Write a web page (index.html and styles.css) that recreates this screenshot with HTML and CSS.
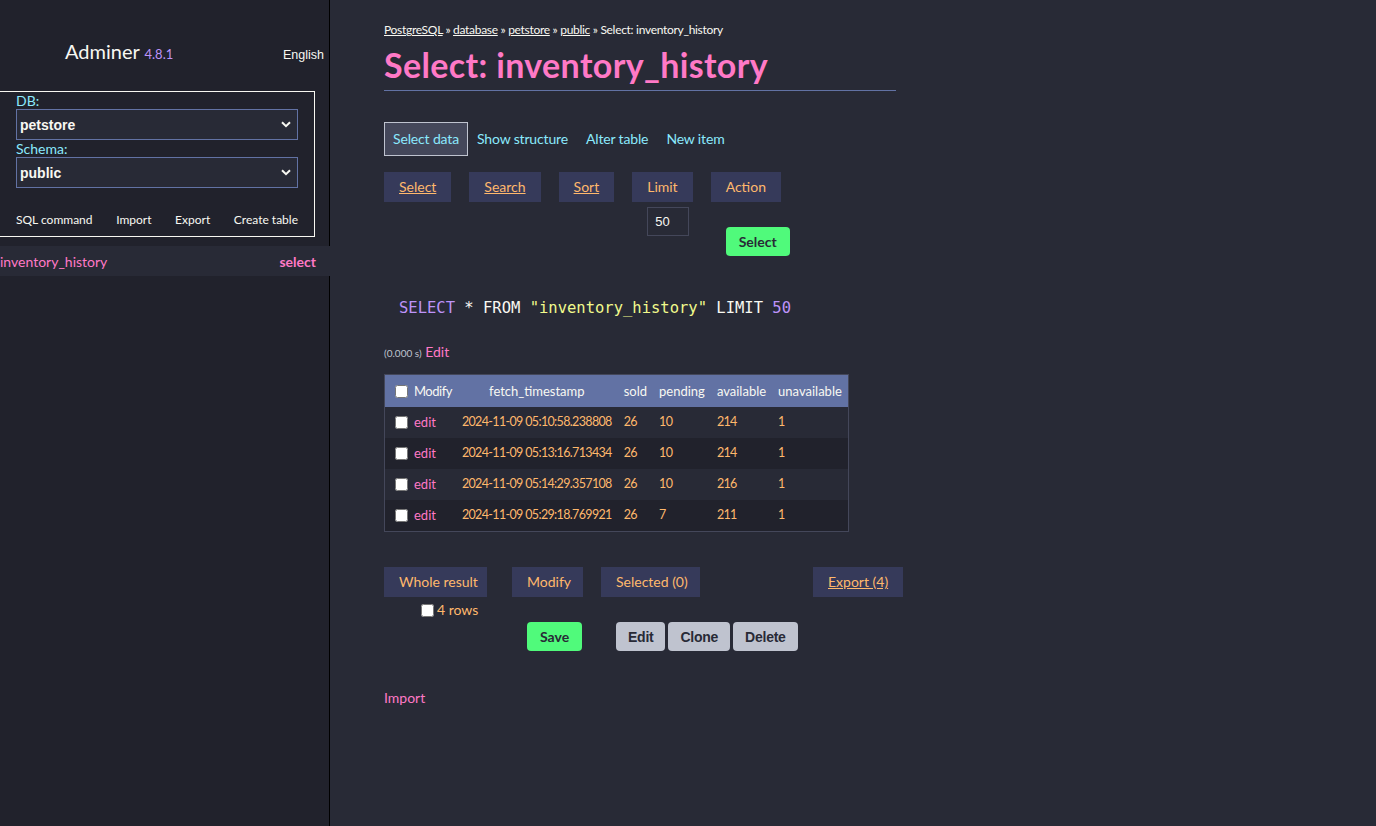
FILE: index.html
```html
<!DOCTYPE html>
<html>
<head>
<meta charset="utf-8">
<link rel="stylesheet" href="styles.css">
<title>Select: inventory_history - Adminer</title>
</head>
<body>
<div class="layout">
  <aside class="menu">
    <div class="menu-head">
      <span class="brand">Adminer <span class="version">4.8.1</span></span>
      <span class="lang">English</span>
    </div>
    <div class="dbbox">
      <div class="label">DB:</div>
      <div class="fake-select"><span>petstore</span><svg class="chev" width="10" height="7" viewBox="0 0 10 7"><path d="M1 1.2 L5 5.2 L9 1.2" fill="none" stroke="#f8f8f2" stroke-width="2"/></svg></div>
      <div class="label">Schema:</div>
      <div class="fake-select"><span>public</span><svg class="chev" width="10" height="7" viewBox="0 0 10 7"><path d="M1 1.2 L5 5.2 L9 1.2" fill="none" stroke="#f8f8f2" stroke-width="2"/></svg></div>
      <div class="menu-links">
        <a>SQL command</a><a>Import</a><a>Export</a><a>Create table</a>
      </div>
    </div>
    <div class="tables">
      <div class="table-row active"><a class="tname">inventory_history</a><a class="tsel">select</a></div>
    </div>
  </aside>
  <main class="content">
    <p class="crumbs"><a>PostgreSQL</a> » <a>database</a> » <a>petstore</a> » <a>public</a> » Select: inventory_history</p>
    <h2 class="title">Select: inventory_history</h2>
    <nav class="tabs">
      <a class="tab active">Select data</a>
      <a class="tab">Show structure</a>
      <a class="tab">Alter table</a>
      <a class="tab">New item</a>
    </nav>
    <div class="fsrow">
      <div class="fs"><div class="legend"><a class="u">Select</a></div></div>
      <div class="fs"><div class="legend"><a class="u">Search</a></div></div>
      <div class="fs"><div class="legend"><a class="u">Sort</a></div></div>
      <div class="fs"><div class="legend">Limit</div><div class="fs-body limit"><span class="input">50</span></div></div>
      <div class="fs"><div class="legend">Action</div><div class="fs-body action"><button class="btn green">Select</button></div></div>
    </div>
    <pre class="sql"><span class="kw">SELECT</span> * FROM <span class="str">"inventory_history"</span> LIMIT <span class="num">50</span></pre>
    <p class="timing"><span class="time">(0.000 s)</span> <a class="pink">Edit</a></p>
    <table class="data">
      <thead>
        <tr><th class="chk"><input type="checkbox"><span class="mod">Modify</span></th><th class="ts">fetch_timestamp</th><th>sold</th><th>pending</th><th>available</th><th>unavailable</th></tr>
      </thead>
      <tbody>
        <tr><td class="chk"><input type="checkbox"><a class="pink">edit</a></td><td class="n">2024-11-09 05:10:58.238808</td><td class="n">26</td><td class="n">10</td><td class="n">214</td><td class="n">1</td></tr>
        <tr><td class="chk"><input type="checkbox"><a class="pink">edit</a></td><td class="n">2024-11-09 05:13:16.713434</td><td class="n">26</td><td class="n">10</td><td class="n">214</td><td class="n">1</td></tr>
        <tr><td class="chk"><input type="checkbox"><a class="pink">edit</a></td><td class="n">2024-11-09 05:14:29.357108</td><td class="n">26</td><td class="n">10</td><td class="n">216</td><td class="n">1</td></tr>
        <tr><td class="chk"><input type="checkbox"><a class="pink">edit</a></td><td class="n">2024-11-09 05:29:18.769921</td><td class="n">26</td><td class="n">7</td><td class="n">211</td><td class="n">1</td></tr>
      </tbody>
    </table>
    <div class="fsrow bottom">
      <div class="fs f1"><div class="legend">Whole result</div><div class="fs-body rows"><label><input type="checkbox">4 rows</label></div></div>
      <div class="fs f2"><div class="legend">Modify</div><div class="fs-body btns"><button class="btn green">Save</button></div></div>
      <div class="fs f3"><div class="legend">Selected (0)</div><div class="fs-body btns"><button class="btn gray">Edit</button><button class="btn gray">Clone</button><button class="btn gray">Delete</button></div></div>
      <div class="fs f4"><div class="legend"><a class="u">Export (4)</a></div></div>
    </div>
    <p class="import"><a class="pink">Import</a></p>
  </main>
</div>
</body>
</html>
```

FILE: styles.css
```css
html, body {
  margin: 0;
  padding: 0;
  height: 100%;
}
body {
  background: #282a36;
  color: #f8f8f2;
  font-family: Lato, "Noto Sans", sans-serif;
  font-size: 14px;
}
a { cursor: pointer; }
.layout {
  display: flex;
  min-height: 826px;
}
.menu {
  width: 329px;
  flex: none;
  background: #21222c;
  border-right: 1px solid #000;
}
.menu-head {
  display: flex;
  align-items: flex-start;
  height: 76px;
  padding-top: 30px;
  box-sizing: border-box;
}
.brand {
  margin-left: 65px;
  font-size: 20px;
  line-height: 24px;
  color: #f8f8f2;
  margin-top: 9px;
}
.version {
  font-size: 13px;
  color: #bd93f9;
}
.lang {
  margin-left: auto;
  margin-right: 5px;
  font-family: "Liberation Sans", Arial, sans-serif;
  font-size: 12.5px;
  line-height: 16px;
  margin-top: 17px;
}
.dbbox {
  margin-top: 15px;
  margin-left: -2px;
  width: 317px;
  box-sizing: border-box;
  border: 1px solid #f8f8f2;
  padding: 0 16px 0 17px;
  height: 146px;
}
.label {
  color: #8be9fd;
  font-size: 14px;
  line-height: 17px;
}
.fake-select {
  height: 31px;
  box-sizing: border-box;
  border: 1px solid #6272a4;
  background: #282a36;
  display: flex;
  align-items: center;
  padding: 0 6px 0 3px;
  font-family: "Liberation Sans", Arial, sans-serif;
  font-weight: bold;
  font-size: 14px;
  color: #f8f8f2;
}
.fake-select .chev { margin-left: auto; }
.menu-links {
  display: flex;
  justify-content: space-between;
  margin-top: 24px;
  font-size: 12px;
}
.menu-links a { color: #f8f8f2; }
.tables { margin-top: 9px; }
.table-row {
  display: flex;
  align-items: center;
  height: 30px;
  width: calc(100% + 1px);
  background: #282a36;
}
.tname { color: #ff79c6; font-size: 14px; }
.tsel { color: #ff79c6; font-weight: bold; margin-left: auto; margin-right: 14px; }

.content {
  flex: 1;
  padding-left: 54px;
  padding-top: 22px;
}
.crumbs {
  margin: 0;
  font-size: 12px;
  line-height: 16px;
  letter-spacing: -0.3px;
}
.crumbs a { color: #f8f8f2; text-decoration: underline; }
.title {
  margin: 7px 0 0 0;
  width: 512px;
  color: #ff79c6;
  font-size: 34px;
  letter-spacing: 0.35px;
  line-height: 40px;
  font-weight: bold;
  padding-bottom: 5px;
  border-bottom: 1px solid #6272a4;
}
.tabs {
  display: flex;
  align-items: center;
  margin-top: 31px;
  height: 34px;
}
.tab {
  color: #8be9fd;
  padding: 0 8px;
  line-height: 32px;
  border: 1px solid transparent;
  letter-spacing: -0.15px;
}
.tab.active {
  background: #44475a;
  border-color: #bfc3cf;
}
.fsrow {
  display: flex;
  gap: 18px;
  margin-top: 16px;
  align-items: flex-start;
}
.fs { display: flex; flex-direction: column; align-items: flex-start; }
.legend {
  background: #363a5a;
  color: #ffb86c;
  height: 30px;
  line-height: 30px;
  padding: 0 15px;
  white-space: nowrap;
}
.legend a { color: #ffb86c; }
.u { text-decoration: underline; }
.fs-body { padding-left: 15px; }
.limit { padding-top: 5px; }
.input {
  display: block;
  width: 42px;
  height: 29px;
  box-sizing: border-box;
  border: 1px solid #44475a;
  font-family: "Liberation Sans", Arial, sans-serif;
  font-size: 13px;
  line-height: 27px;
  padding-left: 7px;
  color: #f8f8f2;
}
.action { padding-top: 25px; }
.btn {
  border: 0;
  border-radius: 4px;
  height: 29px;
  font-family: Lato, "Noto Sans", sans-serif;
  font-weight: bold;
  font-size: 14px;
  color: #282a36;
  padding: 0 13px;
}
.btn.green { background: #50fa7b; }
.btn.gray {
  background: #bfc3cf;
  font-family: "Liberation Sans", Arial, sans-serif;
  font-size: 14px;
  letter-spacing: -0.25px;
  padding: 0 12px;
  margin-right: 3px;
}
.sql {
  margin: 42px 0 0 15px;
  font-family: "DejaVu Sans Mono", monospace;
  font-size: 15.5px;
  line-height: 20px;
  color: #f8f8f2;
}
.kw, .num { color: #bd93f9; }
.str { color: #f1fa8c; }
.timing {
  margin: 24px 0 0 0;
  line-height: 20px;
}
.time { font-size: 10px; color: #bfc3cf; }
.pink { color: #ff79c6; }
.data {
  margin-top: 11px;
  border-collapse: collapse;
  border: 1px solid #44475a;
  font-size: 13px;
}
.data th {
  background: #6272a4;
  color: #f8f8f2;
  font-weight: normal;
  height: 32px;
  padding: 0 6px;
  text-align: left;
  white-space: nowrap;
}
.data th.ts { text-align: center; }
.data .mod { letter-spacing: -0.5px; }
.data td {
  color: #ffb86c;
  height: 29px;
  padding: 0 6px 2px;
  white-space: nowrap;
}
.data td.n { font-size: 12.5px; letter-spacing: -0.65px; }
.data tbody tr:nth-child(odd) td { background: #282a36; }
.data tbody tr:nth-child(even) td { background: #21222c; }
.data .chk { padding-left: 10px; padding-right: 4px; }
.data input[type=checkbox] { margin: 0 6px 0 0; width: 13px; height: 13px; vertical-align: -2px; }
.bottom { margin-top: 35px; gap: 0; }
.f1 { width: 128px; }
.f1 .legend { width: 103px; box-sizing: border-box; }
.rows { padding-left: 37px; padding-top: 4px; color: #ffb86c; }
.rows input { margin: 0 3px 0 0; vertical-align: -2px; }
.f2 { width: 89px; }
.f2 .legend { width: 71px; box-sizing: border-box; }
.btns { padding-top: 25px; display: flex; }
.f3 { width: 212px; }
.f3 .legend { width: 99px; box-sizing: border-box; }
.import { margin: 38px 0 0 0; }
```
